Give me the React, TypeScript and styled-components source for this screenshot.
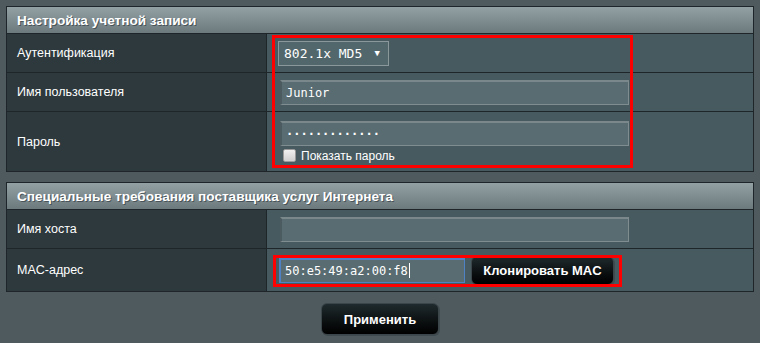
import React from 'react'
import styled, { createGlobalStyle } from 'styled-components'

const GlobalStyle = createGlobalStyle`
  html, body {
    margin: 0;
    padding: 0;
    background: #4e5a5e;
  }
  body {
    font-family: "Liberation Sans", Arial, sans-serif;
  }
`

const Page = styled.div`
  width: 760px;
  height: 343px;
  padding: 6px 6px 0 6px;
  box-sizing: border-box;
  display: flex;
  flex-direction: column;
  gap: 10px;
`

const Section = styled.div`
  position: relative;
  border: 1px solid #1f2629;
  background: #475a5f;
`

const SectionHeader = styled.div`
  height: 27px;
  box-sizing: border-box;
  border-bottom: 1px solid #1f2629;
  background: linear-gradient(to bottom, #93a1a5 0%, #7d8b8f 55%, #6c7a7e 100%);
  color: #ffffff;
  font-weight: bold;
  font-size: 13.6px;
  line-height: 27px;
  padding-left: 10px;
  text-shadow: 1px 1px 0 rgba(30, 40, 45, 0.55);
`

const Row = styled.div<{ $h: number; $last?: boolean }>`
  display: grid;
  grid-template-columns: 260px 1fr;
  height: ${p => p.$h}px;
  box-sizing: border-box;
  border-bottom: ${p => (p.$last ? 'none' : '1px solid #1f2629')};
`

const Label = styled.div`
  background: #2e393d;
  border-right: 1px solid #1f2629;
  color: #ffffff;
  font-size: 12.5px;
  display: flex;
  align-items: center;
  padding-left: 10px;
`

const Field = styled.div`
  display: flex;
  flex-direction: column;
  justify-content: center;
  padding-left: 13px;
  gap: 3px;
`

const FieldRow = styled.div<{ $pad: number }>`
  display: flex;
  align-items: center;
  padding-left: ${p => p.$pad}px;
  gap: 6px;
`

const SelectBox = styled.div`
  width: 111px;
  height: 25px;
  box-sizing: border-box;
  border: 1px solid #8a989c;
  background: #52676c;
  color: #ffffff;
  font-family: "DejaVu Sans Mono", monospace;
  font-size: 13px;
  display: flex;
  align-items: center;
  justify-content: space-between;
  padding: 0 8px 0 5px;
`

const Arrow = styled.span`
  font-size: 9px;
  color: #ffffff;
`

const TextBox = styled.div<{ $w: number; $focus?: boolean }>`
  width: ${p => p.$w}px;
  height: 25px;
  box-sizing: border-box;
  background: #596c71;
  border: 1px solid ${p => (p.$focus ? '#4f82c4' : '#7f8d91')};
  border-top: 2px solid ${p => (p.$focus ? '#4f82c4' : '#7a878b')};
  border-left: 2px solid ${p => (p.$focus ? '#4f82c4' : '#4c5b5f')};
  color: #ffffff;
  font-family: "DejaVu Sans Mono", monospace;
  font-size: 12px;
  display: flex;
  align-items: center;
  padding-left: 4px;
`

const Dots = styled.span`
  font-weight: bold;
`

const Caret = styled.span`
  display: inline-block;
  width: 1px;
  height: 15px;
  background: #ffffff;
  margin-left: 1px;
`

const CheckLine = styled.label`
  display: flex;
  align-items: center;
  gap: 5px;
  color: #ffffff;
  font-size: 12px;
  margin-left: 3px;
`

const CheckSquare = styled.span`
  width: 11px;
  height: 11px;
  border-radius: 2px;
  background: linear-gradient(to bottom, #f0f0f0, #cfcfcf);
  border: 1px solid #9a9a9a;
`

const DarkButton = styled.div<{ $w: number; $h: number }>`
  width: ${p => p.$w}px;
  height: ${p => p.$h}px;
  box-sizing: border-box;
  border-radius: 6px;
  border: 1px solid #3b464a;
  background: linear-gradient(to bottom, #1f2a2e 0%, #0b0f10 60%, #000000 100%);
  box-shadow: 1px 1px 0 #3f4a4e;
  color: #ffffff;
  font-weight: bold;
  font-size: 13px;
  display: flex;
  align-items: center;
  justify-content: center;
`

const Footer = styled.div`
  display: flex;
  justify-content: center;
  margin-top: 1px;
`

const Marker = styled.div<{ $top: number; $left: number; $w: number; $h: number }>`
  position: absolute;
  top: ${p => p.$top}px;
  left: ${p => p.$left}px;
  width: ${p => p.$w}px;
  height: ${p => p.$h}px;
  box-sizing: border-box;
  border: 3px solid #ff0000;
  pointer-events: none;
`

export default function App() {
  return (
    <>
      <GlobalStyle />
      <Page>
        <Section>
          <SectionHeader>Настройка учетной записи</SectionHeader>
          <Row $h={39}>
            <Label>Аутентификация</Label>
            <FieldRow $pad={11}>
              <SelectBox>
                <span>802.1x MD5</span>
                <Arrow>▼</Arrow>
              </SelectBox>
            </FieldRow>
          </Row>
          <Row $h={39}>
            <Label>Имя пользователя</Label>
            <Field>
              <TextBox $w={349}>Junior</TextBox>
            </Field>
          </Row>
          <Row $h={59} $last>
            <Label>Пароль</Label>
            <Field>
              <TextBox $w={349}>
                <Dots>·············</Dots>
              </TextBox>
              <CheckLine>
                <CheckSquare />
                Показать пароль
              </CheckLine>
            </Field>
          </Row>
          <Marker $top={28} $left={265} $w={361} $h={133} />
        </Section>

        <Section>
          <SectionHeader>Специальные требования поставщика услуг Интернета</SectionHeader>
          <Row $h={39}>
            <Label>Имя хоста</Label>
            <Field>
              <TextBox $w={349} />
            </Field>
          </Row>
          <Row $h={42} $last>
            <Label>MAC-адрес</Label>
            <FieldRow $pad={12}>
              <TextBox $w={186} $focus>
                50:e5:49:a2:00:f8
                <Caret />
              </TextBox>
              <DarkButton $w={143} $h={29}>Клонировать MAC</DarkButton>
            </FieldRow>
          </Row>
          <Marker $top={72} $left={266} $w={349} $h={32} />
        </Section>

        <Footer>
          <DarkButton $w={118} $h={32}>Применить</DarkButton>
        </Footer>
      </Page>
    </>
  )
}
